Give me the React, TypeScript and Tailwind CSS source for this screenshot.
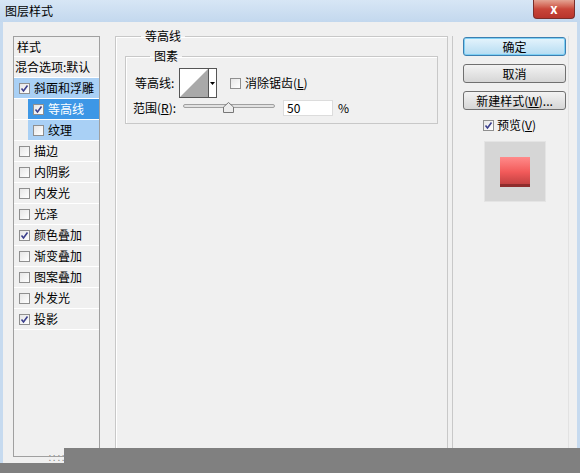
import React from "react";

const font = { fontFamily: '"Noto Sans CJK SC", "Liberation Sans", sans-serif' };

function Check({ checked }: { checked?: boolean }) {
  return (
    <span className="flex h-[11px] w-[11px] shrink-0 items-center justify-center border border-[#8f8f8f] bg-gradient-to-br from-[#e6e6e6] to-white">
      {checked && (
        <svg width="9" height="9" viewBox="0 0 9 9">
          <path d="M1.5 4.5 L3.5 7 L7.5 1.5" fill="none" stroke="#3b3f8c" strokeWidth="1.6" />
        </svg>
      )}
    </span>
  );
}

const layers = [
  { label: "斜面和浮雕", checked: true, style: "bg-[#a9d0f5]" },
  { label: "等高线", checked: true, sub: true, style: "bg-[#3d97e6] text-white" },
  { label: "纹理", sub: true, style: "bg-[#a9d0f5]" },
  { label: "描边" },
  { label: "内阴影" },
  { label: "内发光" },
  { label: "光泽" },
  { label: "颜色叠加", checked: true },
  { label: "渐变叠加" },
  { label: "图案叠加" },
  { label: "外发光" },
  { label: "投影", checked: true },
];

function Btn({ children, focus }: { children: React.ReactNode; focus?: boolean }) {
  return (
    <div
      className={
        "flex h-[19px] w-[103px] items-center justify-center rounded-[3px] border text-[12px] " +
        (focus
          ? "border-[#3c7fb1] bg-gradient-to-b from-[#e5f4fc] to-[#b5dcf2] shadow-[inset_0_0_0_1px_#7fd0f4]"
          : "border-[#707070] bg-gradient-to-b from-[#f3f3f3] to-[#d6d6d6]")
      }
    >
      {children}
    </div>
  );
}

export default function App() {
  return (
    <div className="relative h-[473px] w-[580px] overflow-hidden bg-[#f0f0f0] text-[12px] text-black" style={font}>
      {/* title bar */}
      <div className="flex h-[22px] items-center justify-between bg-gradient-to-b from-[#d7e6f5] to-[#c3d8ee] pl-[5px] pr-[5px]">
        <span className="leading-none">图层样式</span>
        <div className="mb-[3px] flex h-[19px] w-[42px] items-center justify-center self-start rounded-b-[4px] border border-t-0 border-[#7a2e2a] bg-gradient-to-b from-[#e3a393] via-[#c9463a] to-[#b8352c] text-[13px] font-bold text-white">
          x
        </div>
      </div>

      {/* body */}
      <div className="flex h-[451px] border-x-[3px] border-[#c6daef]">
        <div className="flex flex-1 pl-[10px] pr-[8px] pt-[14px]">
          {/* left list */}
          <div className="flex h-[421px] w-[87px] flex-col border border-[#a0a0a0] bg-[#f0f0f0]">
            <div className="flex h-[20px] items-center border-b border-white pl-[3px]">样式</div>
            <div className="flex h-[21px] items-center border-b border-white pl-[1px] whitespace-nowrap">混合选项:默认</div>
            {layers.map((l) => (
              <div key={l.label} className={"flex h-[21px] border-b border-white " + (l.sub ? "pl-[14px]" : "")}>
                <div className={"flex flex-1 items-center gap-[4px] pl-[5px] " + (l.style ?? "")}>
                  <Check checked={l.checked} />
                  <span>{l.label}</span>
                </div>
              </div>
            ))}
            <div className="flex-1" />
          </div>

          {/* main group */}
          <fieldset className="ml-[15px] mt-[-8px] h-[440px] w-[333px] border border-[#c8c8c8] px-[9px] shadow-[inset_1px_1px_0_white]">
            <legend className="ml-[16px] px-[4px] leading-[16px]">等高线</legend>
            <fieldset className="mt-[4px] h-[76px] border border-[#c8c8c8] pl-[9px] shadow-[inset_1px_1px_0_white]">
              <legend className="ml-[15px] px-[4px] leading-[16px]">图素</legend>
              <div className="mt-[4px] flex h-[30px] items-center">
                <span className="w-[44px]">等高线:</span>
                <div className="flex h-[30px] w-[38px] border border-[#555] bg-white">
                  <svg width="28" height="28" viewBox="0 0 28 28" className="shrink-0">
                    <polygon points="0,28 28,0 28,28" fill="#a9a9a9" />
                  </svg>
                  <div className="flex flex-1 items-center justify-center border-l border-[#555]">
                    <svg width="5" height="3" viewBox="0 0 5 3">
                      <polygon points="0,0 5,0 2.5,3" fill="#000" />
                    </svg>
                  </div>
                </div>
                <div className="ml-[13px] flex items-center gap-[4px]">
                  <Check />
                  <span>
                    消除锯齿(<span className="underline">L</span>)
                  </span>
                </div>
              </div>
              <div className="mt-[2px] flex h-[16px] items-center">
                <span className="w-[48px] -ml-[2px]">
                  范围(<span className="underline">R</span>):
                </span>
                <div className="relative ml-[2px] h-[16px] w-[92px]">
                  <div className="absolute left-0 right-0 top-[4px] h-[4px] rounded-full border border-[#a0a0a0] bg-[#e2e2e2]" />
                  <svg width="11" height="11" viewBox="0 0 11 11" className="absolute left-[40px] top-[2px]">
                    <polygon points="5.5,0.5 10.5,5 10.5,10.5 0.5,10.5 0.5,5" fill="#ececec" stroke="#777" />
                  </svg>
                </div>
                <div className="ml-[8px] flex h-[16px] w-[50px] items-center border border-[#dcdcdc] bg-white pl-[3px]">50</div>
                <span className="ml-[5px]">%</span>
              </div>
            </fieldset>
          </fieldset>

          <div className="ml-[4px] h-[440px] w-px bg-[#c8c8c8]" />

          {/* right buttons */}
          <div className="ml-[10px] flex w-[103px] flex-col pt-[1px]">
            <Btn focus>确定</Btn>
            <div className="h-[8px]" />
            <Btn>取消</Btn>
            <div className="h-[8px]" />
            <Btn>
              新建样式(<span className="underline">W</span>)...
            </Btn>
            <div className="ml-[20px] mt-[6px] flex items-center gap-[3px]">
              <Check checked />
              <span>
                预览(<span className="underline">V</span>)
              </span>
            </div>
            <div className="ml-[21px] mt-[7px] flex h-[61px] w-[62px] items-center justify-center border border-[#e4e4e4] bg-[#d6d6d6]">
              <div className="h-[30px] w-[30px] bg-gradient-to-b from-[#ff8a8a] via-[#f25a5a] to-[#b83c3c] shadow-[inset_0_-3px_0_#8e2d2d]" />
            </div>
          </div>
          <div className="ml-auto w-px bg-[#e2e2e2]" />
        </div>
      </div>

      {/* bottom: resize grip, then grey overlay */}
      <div className="absolute left-[48px] top-[454px] text-[8px] leading-none tracking-[1px] text-[#888]">∷∷</div>
      <div className="absolute left-[64px] right-0 top-[448px] h-[15px] bg-[#808080]" />
      <div className="absolute left-0 right-0 top-[463px] h-[10px] bg-[#808080]" />
    </div>
  );
}
